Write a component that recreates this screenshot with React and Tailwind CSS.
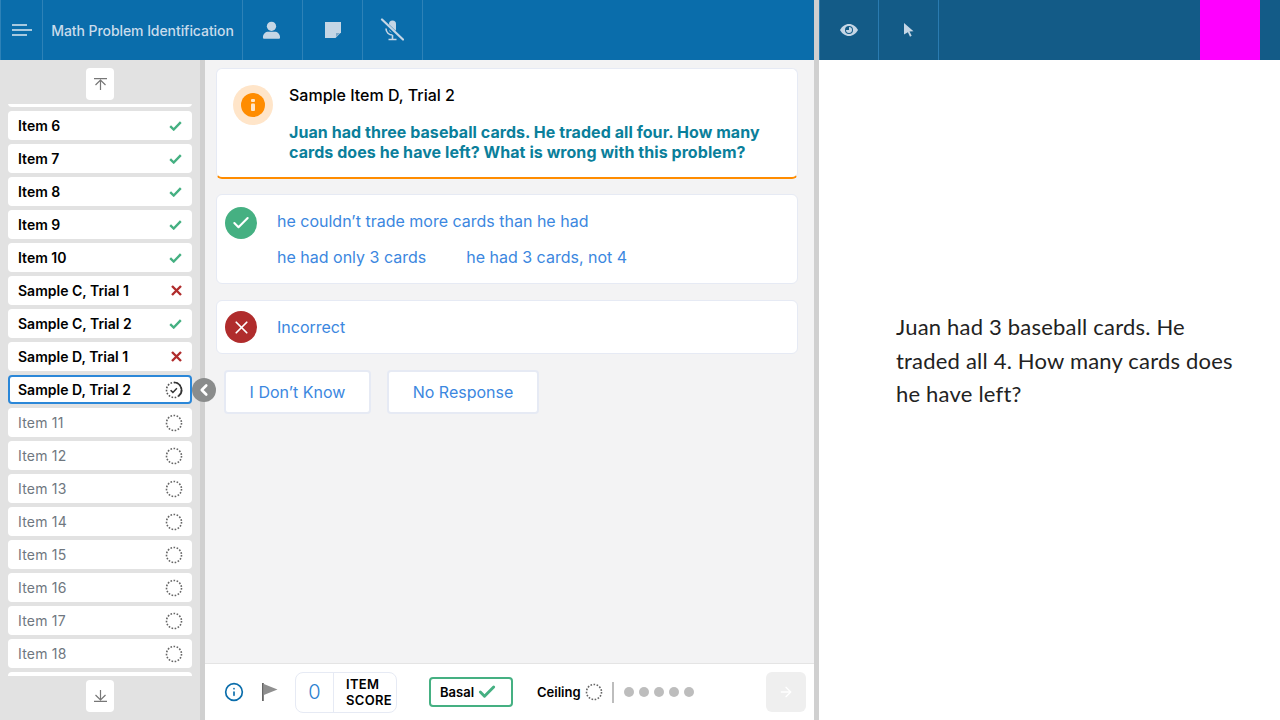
import { ArrowRight, Check, ChevronLeft, Info, X } from "lucide-react";
import React from "react";

const rows = [
  { label: "Item 6", status: "ok" },
  { label: "Item 7", status: "ok" },
  { label: "Item 8", status: "ok" },
  { label: "Item 9", status: "ok" },
  { label: "Item 10", status: "ok" },
  { label: "Sample C, Trial 1", status: "bad" },
  { label: "Sample C, Trial 2", status: "ok" },
  { label: "Sample D, Trial 1", status: "bad" },
  { label: "Sample D, Trial 2", status: "active" },
  { label: "Item 11", status: "todo" },
  { label: "Item 12", status: "todo" },
  { label: "Item 13", status: "todo" },
  { label: "Item 14", status: "todo" },
  { label: "Item 15", status: "todo" },
  { label: "Item 16", status: "todo" },
  { label: "Item 17", status: "todo" },
  { label: "Item 18", status: "todo" },
];

const DashedRing = ({ className }) => (
  <svg viewBox="0 0 18 18" className={className}>
    <circle cx="9" cy="9" r="7.5" fill="none" stroke="#666" strokeWidth="1.6" strokeDasharray="1.6 1.55" />
  </svg>
);

const ActiveRing = () => (
  <svg viewBox="0 0 18 18" className="h-[18px] w-[18px]">
    <circle cx="9" cy="9" r="7.5" fill="none" stroke="#555" strokeWidth="1.6" strokeDasharray="1.6 1.55" />
    <path d="M9 1.5a7.5 7.5 0 0 1 4.5 13.5" fill="none" stroke="#333" strokeWidth="1.6" />
    <path d="M5.6 9.2l2.3 2.2 4-4.2" fill="none" stroke="#333" strokeWidth="1.5" />
  </svg>
);

const TickIcon = () => (
  <svg viewBox="0 0 13 10" className="ml-[3px] h-[10px] w-[13px]">
    <path d="M1.200 5.200l3.500 3.300L11.800 1.200" fill="none" stroke="#45b082" strokeWidth="2.400" />
  </svg>
);

const CrossIcon = () => (
  <svg viewBox="0 0 11 11" className="ml-[5px] h-[11px] w-[11px]">
    <path d="M1 1l9 9M10 1l-9 9" fill="none" stroke="#b02c2c" strokeWidth="2.400" />
  </svg>
);

const StatusIcon = ({ status }) => {
  if (status === "ok") return <TickIcon />;
  if (status === "bad") return <CrossIcon />;
  if (status === "active") return <ActiveRing />;
  return <DashedRing className="h-[18px] w-[18px]" />;
};

const Row = ({ label, status }) => {
  const todo = status === "todo";
  const active = status === "active";
  return (
    <div
      className={`flex h-[29px] shrink-0 items-center justify-between rounded bg-white text-[14px] ${active ? "border-2 border-[#2b87d8] pl-2 pr-[7px]" : "pl-[10px] pr-[9px]"} ${todo ? "font-normal tracking-[0.2px] text-[#6f7780]" : "font-semibold text-black"}`}
    >
      <span>{label}</span>
      <span className="flex w-[18px] justify-center">
        <StatusIcon status={status} />
      </span>
    </div>
  );
};

const HeaderCell = ({ children, className = "" }) => (
  <div className={`flex h-full items-center justify-center border-r border-white/15 ${className}`}>{children}</div>
);

const UserIcon = () => (
  <svg viewBox="0 0 20 20" className="-ml-[2px] h-[19px] w-[19px] fill-[#c5d6e5]">
    <circle cx="10" cy="5.6" r="4.9" />
    <path d="M1 17.3c0-4 3-6 5.4-6h7.2c2.4 0 5.400 2 5.400 6 0 .9-.6 1.400-1.400 1.400H2.400c-.8 0-1.400-.5-1.400-1.400z" />
  </svg>
);

const NoteIcon = () => (
  <svg viewBox="0 0 16 16" className="h-4 w-4">
    <path d="M0 0h16v10.500L10.500 16H0z" fill="#c5d6e5" />
    <path d="M11 11h4l-4 4z" fill="#7fa9c9" />
  </svg>
);

const MicOffIcon = () => (
  <svg viewBox="0 0 24 24" className="-ml-[2px] h-6 w-6" fill="none" stroke="#c5d6e5">
    <rect x="9" y="2.500" width="7" height="12" rx="3.500" fill="#c5d6e5" stroke="none" />
    <path d="M6 10.500c0 4 3 6.500 6.500 6.500M12.500 17v4M8.500 21.500h8" strokeWidth="1.600" />
    <path d="M1.500 2l21 20" stroke="#0a6dab" strokeWidth="4" />
    <path d="M2 1.500l21 20" strokeWidth="2.200" strokeLinecap="round" />
  </svg>
);

const EyeIcon = () => (
  <svg viewBox="0 0 18 12" className="h-3 w-[18px]">
    <path d="M0 6c2-3.500 5.200-6 9-6s7 2.500 9 6c-2 3.500-5.200 6-9 6S2 9.500 0 6z" fill="#c5d6e5" />
    <circle cx="9" cy="6" r="4" fill="#135b87" />
    <path d="M9 3a3 3 0 1 1-3 3h3z" fill="#c5d6e5" />
  </svg>
);

const CursorIcon = () => (
  <svg viewBox="0 0 10 14" className="h-[14px] w-[10px]">
    <path d="M0 0l9.500 8.300-4 .2 2.200 4.300-1.700.9-2.100-4.400L0 11.500z" fill="#c5d6e5" />
  </svg>
);

const FlagIcon = () => (
  <svg viewBox="0 0 16 18" className="h-[18px] w-4">
    <path d="M0 0h1.800v18H0z" fill="#666" />
    <path d="M1.800 1L15.500 6.500 1.800 12z" fill="#8f8f8f" />
  </svg>
);

const ToTopIcon = () => (
  <svg viewBox="0 0 13 12" className="h-3 w-[13px]" fill="none" stroke="#777" strokeWidth="1.200">
    <path d="M0 .6h13M6.500 12V2M1.500 7l5-5 5 5" />
  </svg>
);

const ToBottomIcon = () => (
  <svg viewBox="0 0 13 12" className="h-3 w-[13px]" fill="none" stroke="#777" strokeWidth="1.200">
    <path d="M0 11.400h13M6.500 0v10M1.500 5l5 5 5-5" />
  </svg>
);

const SideButton = ({ children }) => (
  <div className="flex h-8 w-7 items-center justify-center rounded bg-white">{children}</div>
);

const ResultIcon = ({ color, children }) => (
  <div className={`flex h-8 w-8 shrink-0 items-center justify-center rounded-full text-white ${color}`}>{children}</div>
);

const OutlineButton = ({ children, className = "" }) => (
  <div className={`flex h-11 items-center justify-center rounded border-2 border-[#e6eaf4] bg-white text-[#3b87e0] ${className}`}>{children}</div>
);

export default function App() {
  return (
    <div className="flex h-[720px] w-[1280px] overflow-hidden bg-white font-['Inter',sans-serif]">
      {/* left side: nav and item */}
      <div className="flex w-[814px] shrink-0 flex-col">
        <header className="flex h-[60px] shrink-0 bg-[#0a6dab] text-[#c5d9e9]">
          <HeaderCell className="w-[43px] border-l">
            <svg viewBox="0 0 20 12" className="h-3 w-5" fill="none" stroke="#dbe7f1" strokeWidth="1.500">
              <path d="M0 1h15M0 6h20M0 11h15" />
            </svg>
          </HeaderCell>
          <HeaderCell className="w-[200px]">
            <span className="text-[14px] font-medium tracking-[-0.07px] text-[#c9dcec]">Math Problem Identification</span>
          </HeaderCell>
          <HeaderCell className="w-[60px]"><UserIcon /></HeaderCell>
          <HeaderCell className="w-[60px]"><NoteIcon /></HeaderCell>
          <HeaderCell className="w-[60px]"><MicOffIcon /></HeaderCell>
        </header>

        <div className="flex min-h-0 flex-1">
          <aside className="relative flex w-[205px] shrink-0 flex-col border-r-[5px] border-[#d0d0d0] bg-[#e2e2e2]">
            <div className="flex h-11 shrink-0 items-start justify-center pt-2">
              <SideButton><ToTopIcon /></SideButton>
            </div>
            <div className="flex min-h-0 flex-1 flex-col gap-1 overflow-hidden px-2">
              <div className="-mt-[26px] h-[29px] shrink-0 rounded bg-white" />
              {rows.map((r) => <Row key={r.label} label={r.label} status={r.status} />)}
              <div className="h-[29px] shrink-0 rounded bg-white" />
            </div>
            <div className="flex h-11 shrink-0 items-start justify-center pt-1">
              <SideButton><ToBottomIcon /></SideButton>
            </div>
            <div className="absolute right-[-16px] top-[318px] flex h-6 w-6 items-center justify-center rounded-full bg-[#8a8c8c] text-white">
              <ChevronLeft size={18} strokeWidth={3.500} />
            </div>
          </aside>

          <div className="flex min-w-0 flex-1 flex-col">
            <main className="flex min-h-0 flex-1 flex-col bg-[#f3f3f4] pl-[11px] pr-4 pt-2">
              <section className="flex h-[111px] shrink-0 rounded-md border border-b-2 border-[#e6eaf4] border-b-[#ff8c00] bg-white pl-4 pt-4">
                <div className="flex h-10 w-10 shrink-0 items-center justify-center rounded-full bg-[#ffe5c9]">
                  <div className="flex h-6 w-6 items-center justify-center rounded-full bg-[#ff8c00]">
                    <svg viewBox="0 0 4 12" className="h-3 w-1 fill-[#ffe5c9]">
                      <rect width="4" height="3" rx="1" />
                      <rect y="4.500" width="4" height="7.500" rx="1" />
                    </svg>
                  </div>
                </div>
                <div className="ml-4">
                  <h2 className="text-[16px] font-medium leading-5 text-black">Sample Item D, Trial 2</h2>
                  <p className="mt-[17px] w-[490px] text-[16px] font-bold leading-5 tracking-[0.06px] text-[#0b7f9b]">
                    Juan had three baseball cards. He traded all four. How many cards does he have left? What is wrong with this problem?
                  </p>
                </div>
              </section>

              <section className="mt-[15px] flex h-[90px] shrink-0 rounded-md border border-[#e6eaf4] bg-white pl-2 pt-3">
                <ResultIcon color="bg-[#45b082]"><Check size={20} strokeWidth={2.500} /></ResultIcon>
                <div className="ml-5 flex flex-col gap-4 text-[16px] leading-5 text-[#3b87e0]">
                  <span className="mt-[4px]">he couldn’t trade more cards than he had</span>
                  <div className="flex gap-10">
                    <span>he had only 3 cards</span>
                    <span>he had 3 cards, not 4</span>
                  </div>
                </div>
              </section>

              <section className="mt-4 flex h-[54px] shrink-0 items-center rounded-md border border-[#e6eaf4] bg-white pl-2">
                <ResultIcon color="bg-[#b02c2c]"><X size={21} strokeWidth={2} /></ResultIcon>
                <span className="ml-5 text-[16px] text-[#3b87e0]">Incorrect</span>
              </section>

              <div className="mt-4 flex gap-4 pl-2 text-[16px]">
                <OutlineButton className="w-[147px]">I Don’t Know</OutlineButton>
                <OutlineButton className="w-[152px]">No Response</OutlineButton>
              </div>
            </main>

            <footer className="flex h-[57px] shrink-0 items-center border-t border-[#e4e4e4] bg-white">
              <Info size={20} strokeWidth={2} className="ml-[19px] text-[#0a6dab]" />
              <div className="ml-[18px]"><FlagIcon /></div>
              <div className="ml-[17px] flex h-[41px] w-[102px] items-center rounded-lg border border-[#e6eaf4]">
                <span className="flex h-full w-[38px] items-center justify-center border-r border-[#e6eaf4] text-[20px] font-light text-[#2b7fd0]">0</span>
                <span className="pl-3 pt-[1px] text-[13px] font-semibold leading-[15.500px] tracking-[0.3px] text-black">ITEM<br />SCORE</span>
              </div>
              <div className="ml-8 flex h-[30px] w-[84px] items-center gap-[3px] rounded border-2 border-[#45b082] pl-[9px] text-[13px] font-semibold text-black">
                <span className="pt-[1px]">Basal</span>
                <Check size={20} strokeWidth={3.500} className="text-[#45b082]" />
              </div>
              <span className="ml-6 pt-[1px] text-[13px] font-semibold text-black">Ceiling</span>
              <DashedRing className="ml-[4px] h-[18px] w-[18px]" />
              <div className="ml-[9px] h-[21px] w-[2px] bg-[#bdbdbd]" />
              <div className="ml-[10px] flex gap-[5px]">
                {[0, 1, 2, 3, 4].map((i) => <div key={i} className="h-[10px] w-[10px] rounded-full bg-[#bdbdbd]" />)}
              </div>
              <div className="ml-auto mr-2 flex h-10 w-10 items-center justify-center rounded-md bg-[#efefef] text-white">
                <ArrowRight size={16} />
              </div>
            </footer>
          </div>
        </div>
      </div>

      {/* right side: student view */}
      <div className="flex min-w-0 flex-1 flex-col border-l-[5px] border-[#d0d0d0]">
        <header className="flex h-[60px] shrink-0 bg-[#135b87]">
          <HeaderCell className="w-[60px] border-l border-r-[#2a7bb0] border-l-[#2a7bb0]"><EyeIcon /></HeaderCell>
          <HeaderCell className="w-[60px] border-r-[#2a7bb0]"><CursorIcon /></HeaderCell>
          <div className="ml-[261px] h-full w-[60px] bg-[#ff00ff]" />
        </header>
        <div className="flex flex-1 items-center pl-[77px] pb-[59px]">
          <p className="w-[350px] font-['Lato',sans-serif] text-[22px] leading-[33.500px] tracking-[0.2px] text-[#222]">
            Juan had 3 baseball cards. He traded all 4. How many cards does he have left?
          </p>
        </div>
      </div>
    </div>
  );
}
